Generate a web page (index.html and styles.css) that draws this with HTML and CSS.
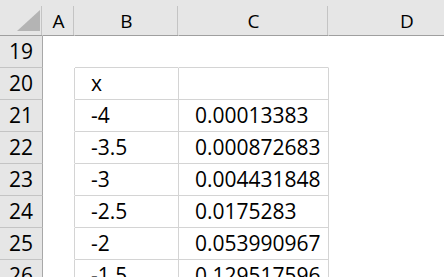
FILE: index.html
```html
<!DOCTYPE html>
<html lang="en">
<head>
    <meta charset="UTF-8">
    <meta name="viewport" content="width=device-width, initial-scale=1.0">
    <title>Sheet1</title>
    <link rel="stylesheet" href="styles.css">
</head>
<body>
    <div class="sheet">
        <div class="corner"><span class="corner-mark"></span></div>
        <div class="col-head">A</div>
        <div class="col-head">B</div>
        <div class="col-head">C</div>
        <div class="col-head">D</div>

        <div class="row-head">19</div>
        <div class="cell"></div>
        <div class="cell tb-top"></div>
        <div class="cell tb-top"></div>
        <div class="cell"></div>

        <div class="row-head">20</div>
        <div class="cell tb-left"></div>
        <div class="cell tb">x</div>
        <div class="cell tb"></div>
        <div class="cell"></div>

        <div class="row-head">21</div>
        <div class="cell tb-left"></div>
        <div class="cell tb">-4</div>
        <div class="cell tb">0.00013383</div>
        <div class="cell"></div>

        <div class="row-head">22</div>
        <div class="cell tb-left"></div>
        <div class="cell tb">-3.5</div>
        <div class="cell tb">0.000872683</div>
        <div class="cell"></div>

        <div class="row-head">23</div>
        <div class="cell tb-left"></div>
        <div class="cell tb">-3</div>
        <div class="cell tb">0.004431848</div>
        <div class="cell"></div>

        <div class="row-head">24</div>
        <div class="cell tb-left"></div>
        <div class="cell tb">-2.5</div>
        <div class="cell tb">0.0175283</div>
        <div class="cell"></div>

        <div class="row-head">25</div>
        <div class="cell tb-left"></div>
        <div class="cell tb">-2</div>
        <div class="cell tb">0.053990967</div>
        <div class="cell"></div>

        <div class="row-head">26</div>
        <div class="cell tb-left"></div>
        <div class="cell tb">-1.5</div>
        <div class="cell tb">0.129517596</div>
        <div class="cell"></div>
    </div>
</body>
</html>
```

FILE: styles.css
```css
body {
    margin: 0;
    overflow: hidden;
    background: #ffffff;
    font-family: 'Open Sans', 'Liberation Sans', sans-serif;
    color: #000;
}

.sheet {
    display: grid;
    grid-template-columns: 43px 32px 104px 150px 157px;
    grid-template-rows: 36px;
    grid-auto-rows: 32px;
    width: 486px;
}

.sheet > div {
    box-sizing: border-box;
    border-right: 1px solid transparent;
    border-bottom: 1px solid transparent;
}

/* Headers */
.corner,
.col-head {
    background: linear-gradient(#c4c4c4, #c4c4c4) right bottom / 1px 29px no-repeat, #e6e6e6;
    border-bottom-color: #9f9f9f !important;
}

.corner {
    display: flex;
    justify-content: flex-end;
    align-items: flex-end;
    padding: 0 2px 4px 0;
}

.corner-mark {
    width: 23px;
    height: 21px;
    background: #b4b4b4;
    clip-path: polygon(100% 0, 100% 100%, 0 100%);
}

.col-head {
    text-align: center;
    font-size: 19px;
    line-height: 19px;
    padding-top: 12px;
}

.row-head {
    background: #e6e6e6;
    border-right-color: #a8a8a8 !important;
    border-bottom-color: #c4c4c4 !important;
    text-align: center;
    font-size: 21px;
    line-height: 21px;
    padding-top: 5px;
}

/* Cells */
.cell {
    font-size: 21px;
    line-height: 21px;
    padding: 5px 0 0 16px;
    white-space: nowrap;
}

.tb {
    border-right-color: #d4d4d4 !important;
    border-bottom-color: #d4d4d4 !important;
}

.tb-top {
    border-bottom-color: #d4d4d4 !important;
}

.tb-left {
    border-right-color: #d4d4d4 !important;
}
```
